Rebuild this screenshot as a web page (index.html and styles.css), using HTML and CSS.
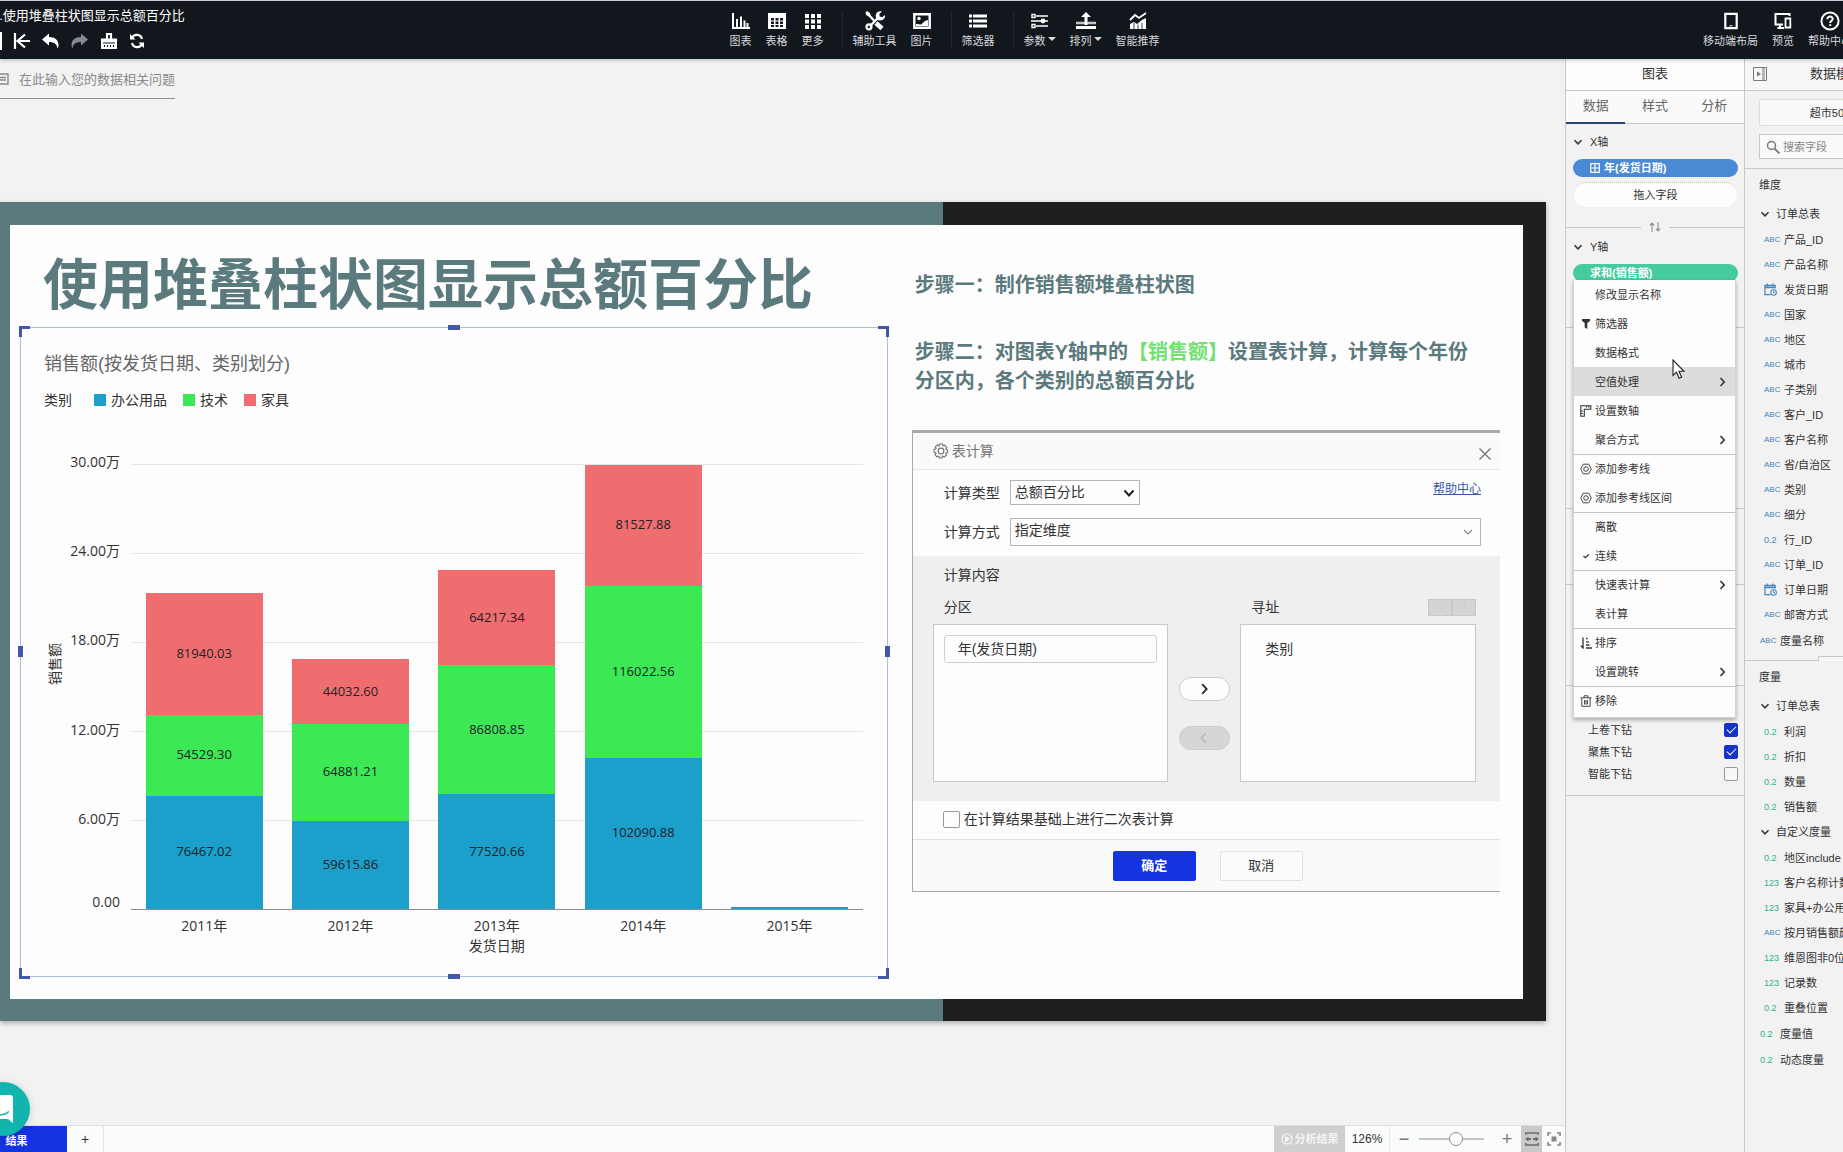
FILE: index.html
```html
<!DOCTYPE html>
<html lang="zh-CN">
<head>
<meta charset="utf-8">
<meta name="viewport" content="width=device-width, initial-scale=1">
<title>2.使用堆叠柱状图显示总额百分比</title>
<link rel="stylesheet" href="styles.css">
</head>
<body>
<svg class="defs" aria-hidden="true">
  <symbol id="chev-down" viewBox="0 0 10 10"><path d="M1.5 3.2 5 6.8 8.500 3.200" fill="none" stroke="currentColor" stroke-width="1.500"/></symbol>
  <symbol id="chev-right" viewBox="0 0 10 10"><path d="M3.500 1 7.200 5 3.500 9" fill="none" stroke="currentColor" stroke-width="1.600"/></symbol>
  <symbol id="calendar" viewBox="0 0 14 14"><path d="M12 6V2.500H1v10h6M1 5h11M3.500 .5v3M9.500 .5v3" fill="none" stroke="currentColor" stroke-width="1.300"/><path d="M1 2.500h11V5H1z" fill="currentColor" opacity=".5"/><circle cx="10.300" cy="10.300" r="3" fill="none" stroke="currentColor" stroke-width="1.100"/><path d="M10.300 8.500v2h1.500" fill="none" stroke="currentColor"/></symbol>
  <symbol id="target" viewBox="0 0 12 12"><path d="M3.300 1.200h5.400L11.300 6l-2.600 4.800H3.300L.7 6z" fill="none" stroke="currentColor" stroke-width=".9"/><circle cx="6" cy="6" r="2.300" fill="none" stroke="currentColor" stroke-width=".9"/></symbol>
</svg>

<div class="app">
  <header class="topbar">
    <div class="topbar-left">
      <h1 class="doc-title">2.使用堆叠柱状图显示总额百分比</h1>
      <div class="history">
        <button class="icon-btn" aria-label="返回"><svg width="18" height="16" viewBox="0 0 18 16"><path d="M2 0v16M17 8H4M12 1.500 4.500 8l7.500 6.500" fill="none" stroke="currentColor" stroke-width="2.200"/></svg></button>
        <button class="icon-btn" aria-label="撤销"><svg width="18" height="16" viewBox="0 0 18 16"><path d="M0 6.500 7 .5V4c6 0 9.500 3 9.500 8 0 1.500-.5 3-1 3.500C15 11 12 9 7 9v3.500z" fill="currentColor"/></svg></button>
        <button class="icon-btn icon-dim" aria-label="重做"><svg width="18" height="16" viewBox="0 0 18 16"><path d="M17 6.500 10 .5V4C4 4 .5 7 .5 12c0 1.500.5 3 1 3.500C2 11 5 9 10 9v3.500z" fill="currentColor"/></svg></button>
        <button class="icon-btn" aria-label="清空"><svg width="18" height="18" viewBox="0 0 18 18"><path d="M2 9V7.500h14V9M7 7V2h4v5" fill="none" stroke="currentColor" stroke-width="2.200"/><path d="M1 8h16v9H1z" fill="currentColor"/><path d="M3 11h12M4.500 15v-2M7.500 15v-2M10.500 15v-2M13.500 15v-2" stroke="#12161d" stroke-width="1.100"/></svg></button>
        <button class="icon-btn" aria-label="刷新"><svg width="16" height="16" viewBox="0 0 16 16"><path d="M13 6A5.300 5.300 0 0 0 3 5M3 10a5.300 5.300 0 0 0 10 1" fill="none" stroke="currentColor" stroke-width="2.200"/><path d="M1 1v5.500h5.500zM15 15V9.500H9.500z" fill="currentColor"/></svg></button>
      </div>
    </div>
    <nav class="tools" aria-label="工具栏">
      <button class="tool"><svg width="18" height="18" viewBox="0 0 18 18"><path d="M1 1v15h17" fill="none" stroke="currentColor" stroke-width="2"/><path d="M5 15V7M9 15V4.500M12.500 15V8.500M15.500 15v-4" stroke="currentColor" stroke-width="2"/></svg><span>图表</span></button>
      <button class="tool"><svg width="18" height="18" viewBox="0 0 18 18"><path d="M0 1h18v16H0z" fill="currentColor"/><path d="M3 6h3v2.500H3zM7.500 6h3v2.500h-3zM12 6h3v2.500h-3zM3 9.500h3V12H3zM7.500 9.500h3V12h-3zM12 9.500h3V12h-3zM3 13h3v2H3zM7.500 13h3v2h-3zM12 13h3v2h-3z" fill="#12161d"/></svg><span>表格</span></button>
      <button class="tool"><svg width="18" height="18" viewBox="0 0 18 18"><path d="M1 2h4v4H1zM7 2h4v4H7zM13 2h4v4h-4zM1 7.500h4v4H1zM7 7.500h4v4H7zM13 7.500h4v4h-4zM1 13h4v4H1zM7 13h4v4H7zM13 13h4v4h-4z" fill="currentColor"/></svg><span>更多</span></button>
      <span class="divider"></span>
      <button class="tool"><svg width="20" height="20" viewBox="0 0 20 20"><path d="M2 2l7.500 8M5.500 14.500 14 6" stroke="currentColor" stroke-width="2.400"/><path d="m11 12 6 5.500" stroke="currentColor" stroke-width="4.600"/><path d="M.5 1.500 2 0l3 2 .5 3L4 5.500 1 4z" fill="currentColor"/><path d="M17 .5a4.700 4.700 0 1 0 3 3.500l-2.700 2.200-2.500-.8-.5-2.500z" fill="currentColor"/><circle cx="4" cy="15.800" r="3.600" fill="currentColor"/><circle cx="3.800" cy="16" r="1.200" fill="#12161d"/></svg><span>辅助工具</span></button>
      <button class="tool"><svg width="18" height="18" viewBox="0 0 18 18"><path d="M1.300 2.300h15.400v13.400H1.300z" fill="none" stroke="currentColor" stroke-width="2.400"/><circle cx="6" cy="6.500" r="1.700" fill="currentColor"/><path d="M3 14v-2l5 .5L12 9l3-1v6z" fill="currentColor"/></svg><span>图片</span></button>
      <span class="divider"></span>
      <button class="tool"><svg width="18" height="18" viewBox="0 0 18 18"><path d="M0 4h3M4 4h14M0 9h3M4 9h14M0 14h3M4 14h14" stroke="currentColor" stroke-width="2.800"/></svg><span>筛选器</span></button>
      <span class="divider"></span>
      <button class="tool"><svg width="18" height="18" viewBox="0 0 18 18"><path d="M5 4h12M0 9h17M5 14h12" stroke="currentColor" stroke-width="1.600"/><path d="M1 2.500h3v3H1zM1 12.500h3v3H1z" fill="none" stroke="currentColor" stroke-width="1.400"/><circle cx="12" cy="9" r="2.400" fill="currentColor"/></svg><span>参数<i class="caret"></i></span></button>
      <button class="tool"><svg width="20" height="18" viewBox="0 0 20 18"><path d="M10 0 5 5h3.500v8h3V5H15z" fill="currentColor"/><path d="M0 11h20" stroke="currentColor" stroke-width="2.600" opacity=".75"/><path d="M0 15.500h20" stroke="currentColor" stroke-width="3"/></svg><span>排列<i class="caret"></i></span></button>
      <button class="tool"><svg width="18" height="18" viewBox="0 0 18 18"><path d="m1 8 5-5 4 3 7-5" fill="none" stroke="currentColor" stroke-width="1.800"/><path d="M1 17v-5l4-2 3 2 5-4 4-2v11zM1 17h17" fill="currentColor"/><path d="M5 17v-6M9 17v-4.500M13 17v-6" stroke="#12161d" stroke-width=".8"/></svg><span>智能推荐</span></button>
    </nav>
    <div class="tools tools-right">
      <button class="tool"><svg width="14" height="18" viewBox="0 0 14 18"><path d="M1.300 1.800h11.400v14.400H1.300z" fill="none" stroke="currentColor" stroke-width="2.200"/><path d="M5.500 13.800h3" stroke="currentColor"/></svg><span>移动端布局</span></button>
      <button class="tool"><svg width="18" height="18" viewBox="0 0 18 18"><path d="M15.500 4V2H1.500v10.500H9M3.500 16H10M6 12v4" fill="none" stroke="currentColor" stroke-width="2"/><path d="M11.500 6.500h4.800v9h-4.800z" fill="none" stroke="currentColor" stroke-width="1.800"/></svg><span>预览</span></button>
      <button class="tool"><svg width="20" height="20" viewBox="0 0 20 20"><circle cx="10" cy="10" r="8.600" fill="none" stroke="currentColor" stroke-width="2"/><path d="M7.300 8.200C7.300 4.500 13 5 12.700 8c-.2 1.700-2.500 2-2.500 4M10.200 13.200v1.800" fill="none" stroke="currentColor" stroke-width="2"/></svg><span>帮助中心</span></button>
    </div>
  </header>

  <div class="workspace">
    <main class="canvas">
      <div class="ask">
        <svg class="ask-icon" width="9" height="12" viewBox="0 0 9 12"><path d="M0 1h8v10H0M0 4.500h6M0 7h6" fill="none" stroke="currentColor" stroke-width="1.400"/></svg>
        <input class="ask-input" type="text" placeholder="在此输入您的数据相关问题" aria-label="在此输入您的数据相关问题">
      </div>

      <div class="slide">
        <div class="slide-body">
          <section class="slide-chart">
            <h2 class="slide-title">使用堆叠柱状图显示总额百分比</h2>
            <figure class="chart">
              <i class="corner corner-tl"></i><i class="corner corner-tr"></i><i class="corner corner-bl"></i><i class="corner corner-br"></i>
              <i class="knob knob-top"></i><i class="knob knob-bottom"></i><i class="knob knob-left"></i><i class="knob knob-right"></i>
              <figcaption class="chart-title">销售额(按发货日期、类别划分)</figcaption>
              <ul class="legend">
                <li class="legend-name">类别</li>
                <li><i class="swatch office"></i>办公用品</li>
                <li><i class="swatch tech"></i>技术</li>
                <li><i class="swatch furniture"></i>家具</li>
              </ul>
              <div class="plot-grid">
                <span class="y-title">销售额</span>
                <ol class="y-axis">
                  <li><span>30.00万</span></li><li><span>24.00万</span></li><li><span>18.00万</span></li><li><span>12.00万</span></li><li><span>6.00万</span></li><li><span>0.00</span></li>
                </ol>
                <div class="plot">
                  <div class="stack"><span class="seg furniture" style="height:27.31%">81940.03</span><span class="seg tech" style="height:18.18%">54529.30</span><span class="seg office" style="height:25.49%">76467.02</span></div>
                  <div class="stack"><span class="seg furniture" style="height:14.68%">44032.60</span><span class="seg tech" style="height:21.63%">64881.21</span><span class="seg office" style="height:19.87%">59615.86</span></div>
                  <div class="stack"><span class="seg furniture" style="height:21.41%">64217.34</span><span class="seg tech" style="height:28.94%">86808.85</span><span class="seg office" style="height:25.84%">77520.66</span></div>
                  <div class="stack"><span class="seg furniture" style="height:27.18%">81527.88</span><span class="seg tech" style="height:38.67%">116022.56</span><span class="seg office" style="height:34.03%">102090.88</span></div>
                  <div class="stack"><span class="seg office" style="height:0.4%"></span></div>
                </div>
                <ol class="x-axis"><li>2011年</li><li>2012年</li><li>2013年</li><li>2014年</li><li>2015年</li></ol>
                <span class="x-title">发货日期</span>
              </div>
            </figure>
          </section>

          <section class="slide-steps">
            <p class="step">步骤一：制作销售额堆叠柱状图</p>
            <p class="step step-two">步骤二：对图表Y轴中的<em class="hl">【销售额】</em>设置表计算，计算每个年份<br>分区内，各个类别的总额百分比</p>

            <form class="dialog" onsubmit="return false">
              <div class="dialog-head">
                <svg width="16" height="16" viewBox="0 0 16 16"><path d="m6.500 1 3 0 .5 1.800 1.800-.7 2 2.400-1 1.600 1.700 1v2.400l-1.700.8.5 2-2.200 1.800-1.500-1-1 1.900H6.500l-.7-1.800-2 .7-1.700-2.200.9-1.600L1 9V6.500l2-.8-.7-1.900L4.500 2l1.500.9z" fill="none" stroke="currentColor" stroke-width="1.200"/><circle cx="8" cy="8" r="2.800" fill="none" stroke="currentColor" stroke-width="1.200"/></svg>
                <h3 class="dialog-title">表计算</h3>
                <button class="dialog-close" aria-label="关闭"><svg width="12" height="12" viewBox="0 0 12 12"><path d="m.5.5 11 11M11.500.5l-11 11" stroke="currentColor" stroke-width="1.400"/></svg></button>
              </div>
              <div class="dialog-fields">
                <label for="calc-type">计算类型</label>
                <span class="select select-short"><select id="calc-type"><option>总额百分比</option></select><svg class="select-arrow dark" width="12" height="12" viewBox="0 0 12 12"><path d="m1.500 3.500 4.500 5 4.500-5" fill="none" stroke="currentColor" stroke-width="2"/></svg></span>
                <a class="help" href="#help">帮助中心</a>
                <label for="calc-mode">计算方式</label>
                <span class="select select-long"><select id="calc-mode"><option>指定维度</option></select><svg class="select-arrow" width="12" height="12" viewBox="0 0 12 12"><path d="M2 4l4 4 4-4" fill="none" stroke="currentColor" stroke-width="1.200"/></svg></span>
              </div>
              <div class="dialog-scope">
                <h4 class="scope-title">计算内容</h4>
                <span class="scope-name scope-part">分区</span>
                <div class="scope-addr"><span class="scope-name">寻址</span><span class="order"><button disabled aria-label="下移">↓</button><button disabled aria-label="上移">↑</button></span></div>
                <div class="list"><span class="list-item chosen">年(发货日期)</span></div>
                <div class="movers">
                  <button class="mover" aria-label="移到寻址"><svg width="12" height="12"><use href="#chev-right"/></svg></button>
                  <button class="mover mover-off" disabled aria-label="移到分区"><svg width="12" height="12" class="flip"><use href="#chev-right"/></svg></button>
                </div>
                <div class="list"><span class="list-item">类别</span></div>
              </div>
              <label class="dialog-again"><input type="checkbox" class="box">在计算结果基础上进行二次表计算</label>
              <div class="dialog-foot"><button class="btn btn-primary">确定</button><button class="btn">取消</button></div>
            </form>
          </section>
        </div>
      </div>

      <footer class="statusbar">
        <button class="sheet">结果</button>
        <button class="sheet-add" aria-label="新建">+</button>
        <button class="analyse" disabled><svg width="12" height="12" viewBox="0 0 12 12"><circle cx="6" cy="6" r="5" fill="none" stroke="currentColor" stroke-width="1.200"/><path d="M4.500 3.500v5L8.500 6zM9 9l3 3" fill="currentColor" stroke="currentColor"/></svg>分析结果</button>
        <span class="zoom-value">126%</span>
        <button class="zoom-btn" aria-label="缩小">−</button>
        <input class="zoom-range" type="range" min="0" max="100" value="59" aria-label="缩放">
        <button class="zoom-btn zoom-in" aria-label="放大">+</button>
        <button class="fit fit-on" aria-label="适应宽度"><svg width="14" height="14" viewBox="0 0 14 14"><path d="M.8 3V1h12.400v2M.8 11v2h12.400v-2" fill="none" stroke="currentColor" stroke-width="1.400"/><path d="m0 7 3.500-2.500V6H6v2H3.500v1.500zM14 7l-3.500-2.500V6H8v2h2.500v1.500z" fill="currentColor"/></svg></button>
        <button class="fit" aria-label="适应页面"><svg width="14" height="14" viewBox="0 0 14 14"><path d="M4 1H1v3M10 1h3v3M4 13H1v-3M10 13h3v-3" fill="none" stroke="currentColor" stroke-width="1.700"/><path d="M4.500 4.500h5v5h-5z" fill="currentColor"/></svg></button>
      </footer>
      <button class="chat" aria-label="在线客服"><svg width="32" height="32" viewBox="0 0 32 32"><path d="M6 2h20a3 3 0 0 1 3 3v25l-5-4H6a3 3 0 0 1-3-3V5a3 3 0 0 1 3-3z" fill="#fff"/><path d="M8 19c5 4 12 4 17-.5" fill="none" stroke="#12b5ae" stroke-width="1.500"/></svg></button>
    </main>

    <aside class="panel">
      <h2 class="panel-title">图表</h2>
      <div class="tabs" role="tablist">
        <button class="tab tab-on" role="tab" aria-selected="true">数据</button><button class="tab" role="tab">样式</button><button class="tab" role="tab">分析</button>
      </div>
      <section class="shelf">
        <h3 class="shelf-name"><svg width="10" height="10"><use href="#chev-down"/></svg>X轴</h3>
        <button class="pill pill-blue"><svg width="10" height="10" viewBox="0 0 10 10"><path d="M.7.7h8.600v8.600H.7zM5 .7v8.600M.7 5h8.600" fill="none" stroke="currentColor" stroke-width="1.200"/></svg>年(发货日期)</button>
        <div class="drop">拖入字段</div>
      </section>
      <div class="swap"><svg width="12" height="10" viewBox="0 0 12 10"><path d="M3 10V1M.8 3.300 3 1l2.200 2.300M9 0v9M6.800 6.700 9 9l2.200-2.300" fill="none" stroke="currentColor" stroke-width="1.100"/></svg></div>
      <section class="shelf shelf-y">
        <h3 class="shelf-name"><svg width="10" height="10"><use href="#chev-down"/></svg>Y轴</h3>
        <button class="pill pill-green">求和(销售额)</button>
        <div class="menu" role="menu">
          <div class="menu-group">
            <button role="menuitem">修改显示名称</button>
            <button role="menuitem"><svg class="lead" width="12" height="12" viewBox="0 0 12 12"><path d="M2 1h8v2L7.300 5v6L4.700 9.500V5L2 3z" fill="currentColor"/></svg>筛选器</button>
            <button role="menuitem">数据格式</button>
            <button role="menuitem" class="hover">空值处理<svg class="more" width="10" height="10"><use href="#chev-right"/></svg></button>
            <button role="menuitem"><svg class="lead" width="12" height="12" viewBox="0 0 12 12"><path d="M.8.800h10v3.500H4.300v7H.8zM6.500.8v1.800M8.800.8v1.800M.8 6h2M.8 8.500h2" fill="none" stroke="currentColor" stroke-width="1.100"/></svg>设置数轴</button>
            <button role="menuitem">聚合方式<svg class="more" width="10" height="10"><use href="#chev-right"/></svg></button>
          </div>
          <div class="menu-group">
            <button role="menuitem"><svg class="lead" width="12" height="12"><use href="#target"/></svg>添加参考线</button>
            <button role="menuitem"><svg class="lead" width="12" height="12"><use href="#target"/></svg>添加参考线区间</button>
          </div>
          <div class="menu-group">
            <button role="menuitem">离散</button>
            <button role="menuitem"><svg class="lead" width="10" height="10" viewBox="0 0 10 10"><path d="m2.500 5 1.800 1.800L8 3.500" fill="none" stroke="currentColor" stroke-width="1.200"/></svg>连续</button>
          </div>
          <div class="menu-group">
            <button role="menuitem">快速表计算<svg class="more" width="10" height="10"><use href="#chev-right"/></svg></button>
            <button role="menuitem">表计算</button>
          </div>
          <div class="menu-group">
            <button role="menuitem"><svg class="lead" width="12" height="12" viewBox="0 0 12 12"><path d="M3 .5v10.300M.8 8.600 3 11l.2-2.400M6 1.500h1.500M6 4.800h3M6 8h3.500M6 11h6" fill="none" stroke="currentColor" stroke-width="1.300"/></svg>排序</button>
            <button role="menuitem">设置跳转<svg class="more" width="10" height="10"><use href="#chev-right"/></svg></button>
          </div>
          <div class="menu-group">
            <button role="menuitem"><svg class="lead" width="12" height="12" viewBox="0 0 12 12"><path d="M.5 2.800h11M4 2.500V.8h4v1.700M1.800 3v8.300h8.400V3M4.500 5v4.500M6 5v4.500M7.500 5v4.500" fill="none" stroke="currentColor" stroke-width=".9"/></svg>移除</button>
          </div>
          <svg class="cursor" width="14" height="21" viewBox="0 0 14 21"><path d="M1 1v15.500l3.500-3.300 2.600 6 2.500-1-2.600-5.900H12z" fill="#fff" stroke="#222" stroke-width="1.100"/></svg>
        </div>
      </section>
      <section class="blank blank-tall"></section>
      <section class="blank blank-low"></section>
      <section class="blank blank-mid"></section>
      <section class="drill">
        <label>上卷下钻<input type="checkbox" class="tick" checked></label>
        <label>聚焦下钻<input type="checkbox" class="tick" checked></label>
        <label>智能下钻<input type="checkbox" class="tick"></label>
      </section>
    </aside>

    <aside class="model">
      <div class="model-head"><svg width="14" height="14" viewBox="0 0 14 14"><path d="M.5.500h13v13H.5z" fill="none" stroke="currentColor"/><path d="M10.500 1v12" stroke="currentColor" stroke-width="3" opacity=".5"/><path d="M4 4.500v5L8 7z" fill="currentColor"/></svg><h2>数据模型</h2></div>
      <button class="source">超市500</button>
      <label class="search"><svg width="14" height="14" viewBox="0 0 14 14"><circle cx="5.500" cy="5.500" r="4" fill="none" stroke="currentColor" stroke-width="1.500"/><path d="m8.500 8.500 5 5" stroke="currentColor" stroke-width="1.800"/></svg><input type="search" placeholder="搜索字段" aria-label="搜索字段"></label>
      <section class="fields fields-dim">
        <h3>维度</h3>
        <ul>
          <li class="folder"><svg width="10" height="10"><use href="#chev-down"/></svg>订单总表</li>
          <li><b>ABC</b>产品_ID</li>
          <li><b>ABC</b>产品名称</li>
          <li><svg class="cal" width="13" height="13"><use href="#calendar"/></svg>发货日期</li>
          <li><b>ABC</b>国家</li>
          <li><b>ABC</b>地区</li>
          <li><b>ABC</b>城市</li>
          <li><b>ABC</b>子类别</li>
          <li><b>ABC</b>客户_ID</li>
          <li><b>ABC</b>客户名称</li>
          <li><b>ABC</b>省/自治区</li>
          <li><b>ABC</b>类别</li>
          <li><b>ABC</b>细分</li>
          <li><b class="num">0.2</b>行_ID</li>
          <li><b>ABC</b>订单_ID</li>
          <li><svg class="cal" width="13" height="13"><use href="#calendar"/></svg>订单日期</li>
          <li><b>ABC</b>邮寄方式</li>
          <li class="outer"><b>ABC</b>度量名称</li>
        </ul>
      </section>
      <section class="fields fields-measure">
        <i class="grip"></i>
        <h3>度量</h3>
        <ul>
          <li class="folder"><svg width="10" height="10"><use href="#chev-down"/></svg>订单总表</li>
          <li><b class="num green">0.2</b>利润</li>
          <li><b class="num green">0.2</b>折扣</li>
          <li><b class="num green">0.2</b>数量</li>
          <li><b class="num green">0.2</b>销售额</li>
          <li class="folder"><svg width="10" height="10"><use href="#chev-down"/></svg>自定义度量</li>
          <li><b class="num green">0.2</b>地区include</li>
          <li><b class="num green">123</b>客户名称计数</li>
          <li><b class="num green">123</b>家具+办公用品</li>
          <li><b>ABC</b>按月销售额颜色</li>
          <li><b class="num green">123</b>维恩图非0位置</li>
          <li><b class="num green">123</b>记录数</li>
          <li><b class="num green">0.2</b>重叠位置</li>
          <li class="outer"><b class="num green">0.2</b>度量值</li>
          <li class="outer"><b class="num green">0.2</b>动态度量</li>
        </ul>
      </section>
    </aside>
  </div>
</div>
</body>
</html>
```

FILE: styles.css
```css
* { box-sizing: border-box; }
html, body { height: 100%; }
body {
  margin: 0;
  overflow: hidden;
  background: #f2f2f2;
  color: #333;
  font: 11px/16px "Liberation Sans", "Noto Sans CJK SC", sans-serif;
}
h1, h2, h3, h4, p, ul, ol, figure { margin: 0; padding: 0; font-weight: 400; }
ul, ol { list-style: none; }
button, input, select { font: inherit; color: inherit; margin: 0; }
button { padding: 0; border: 0; background: none; }
svg { display: block; flex: none; }
.defs { position: absolute; width: 0; height: 0; }

/* The editor extends past the right edge of the window. */
.app { display: flex; flex-direction: column; width: calc(100% + 46px); height: 100vh; border-top: 1px solid #d3dbe2; }

/* Top bar */
.topbar {
  display: grid;
  grid-template-columns: 1fr auto 1fr;
  flex: none;
  height: 58px;
  background: #12161d;
  color: #fff;
  box-shadow: 0 1px 4px rgba(0, 0, 0, .25);
  z-index: 1;
}
.topbar-left { display: flex; flex-direction: column; }
.doc-title { margin: 6px 0 0 -8px; font-size: 13px; line-height: 18px; white-space: nowrap; }
.history { display: flex; align-items: center; gap: 11px; height: 18px; margin-top: 7px; border-left: 2px solid #fff; padding-left: 11px; }
.icon-dim { color: #85888c; }
.tools { display: flex; gap: 14px; padding-top: 9px; }
.tools-right { justify-content: flex-end; padding-right: 37px; }
.tool { display: flex; flex-direction: column; align-items: center; white-space: nowrap; align-self: flex-start; }
.tool svg { height: 22px; }
.tool span { margin-top: 1px; line-height: 16px; color: #d8dadd; }
.divider { width: 1px; height: 36px; margin: 2px -4px 0 4px; background: #232830; }
.caret { display: inline-block; margin-left: 2px; vertical-align: 4px; border: 4px solid transparent; border-top-color: #d8dadd; border-bottom: 0; }

.workspace { display: flex; flex: 1; min-height: 0; }

/* Canvas */
.canvas { position: relative; display: flex; flex-direction: column; flex: 1; min-width: 0; }
.ask { display: flex; align-items: center; gap: 10px; width: 175px; height: 40px; border-bottom: 1px solid #8f8f8f; color: #8a8a8a; }
.ask-input { flex: 1; min-width: 0; border: 0; padding: 2px 0 0; background: none; font-size: 13px; }
.ask-input::placeholder { color: #8a8a8a; }

.slide {
  margin: 103px 19px 0 0;
  padding: 23px 23px 22px 10px;
  background: linear-gradient(90deg, #5b7a7d 61%, #1f1f1f 61%);
  box-shadow: 0 2px 5px rgba(0, 0, 0, .3);
}
.slide-body { display: grid; grid-template-columns: 59fr 40fr; gap: 24px; padding: 0 23px 22px 10px; background: #fdfdfd; }
.slide-title { padding: 24px 0 6px 23px; color: #5b7a7d; font-size: 55px; line-height: 72px; font-weight: 700; white-space: nowrap; }

.chart { position: relative; padding: 24px 24px 20px 23px; border: 1px solid #a9bfe0; font-size: 14px; line-height: 20px; }
.corner { position: absolute; width: 11px; height: 11px; border: 0 solid #4257a8; }
.corner-tl { top: -2px; left: -2px; border-width: 3px 0 0 3px; }
.corner-tr { top: -2px; right: -2px; border-width: 3px 3px 0 0; }
.corner-bl { bottom: -3px; left: -2px; border-width: 0 0 3px 3px; }
.corner-br { bottom: -3px; right: -2px; border-width: 0 3px 3px 0; }
.knob { position: absolute; width: 12px; height: 5px; background: #4257a8; }
.knob-top { top: -3px; left: 50%; margin-left: -6px; }
.knob-bottom { bottom: -3px; left: 50%; margin-left: -6px; }
.knob-left, .knob-right { top: 50%; width: 5px; height: 11px; margin-top: -6px; }
.knob-left { left: -3px; }
.knob-right { right: -3px; }
.chart-title { color: #666; font-size: 18px; line-height: 24px; }
.legend { display: flex; gap: 16px; margin-top: 14px; }
.legend li { display: flex; align-items: center; gap: 5px; }
.legend .legend-name { margin-right: 6px; }
.swatch { width: 12px; height: 12px; }
.office { background: #1d9fcb; }
.tech { background: #3de855; }
.furniture { background: #ef6d6f; }

.plot-grid { display: grid; grid-template-columns: 22px 54px 1fr; grid-template-rows: 446px auto auto; margin-top: 54px; font-family: "Open Sans", "Noto Sans CJK SC", sans-serif; }
.y-title { place-self: center; margin-top: -46px; writing-mode: vertical-rl; text-orientation: sideways; rotate: 180deg; }
.y-axis { display: flex; flex-direction: column; text-align: right; }
.y-axis li { flex: 1 1 0; }
.y-axis li:last-child { flex: none; height: 0; }
.y-axis span { display: block; margin-top: -12px; }
.y-axis li:last-child span { margin-top: -18px; }
.plot {
  display: flex;
  margin-left: 11px;
  border-bottom: 1px solid #8c8c8c;
  background: linear-gradient(#e6e6e6 1px, transparent 1px) 0 0 / 100% 20%;
}
.stack { display: flex; flex-direction: column; justify-content: flex-end; flex: 1; padding: 0 2%; }
.seg { display: flex; align-items: center; justify-content: center; padding-bottom: 2px; color: #1c2226; font-size: 13px; }
.x-axis { display: flex; grid-column: 3; margin: 6px 0 0 11px; text-align: center; }
.x-axis li { flex: 1; }
.x-title { grid-column: 3; margin-left: 11px; text-align: center; }

.step { padding-left: 3px; color: #5b7a7d; font-size: 20px; line-height: 29px; font-weight: 700; white-space: nowrap; }
.slide-steps { padding-top: 46px; }
.step-two { margin-top: 38px; }
.hl { color: #72e072; font-style: normal; }

/* Table calculation dialog */
.dialog { margin-top: 34px; border: 1px solid #a9a9a9; border-width: 3px 0 1px 1px; font-size: 14px; line-height: 20px; background: #fdfdfd; }
.dialog-head { display: flex; align-items: center; gap: 3px; height: 37px; padding: 0 9px 0 20px; border-bottom: 1px solid #e6e6e6; background: #fafafa; color: #777; }
.dialog-title { flex: 1; font-size: 14px; }
.dialog-close { padding-top: 6px; }
.dialog-fields { display: grid; grid-template-columns: 57px 130px 1fr; column-gap: 9px; padding: 10px 19px 10px 31px; row-gap: 13px; align-items: center; }
.select { display: grid; align-items: center; }
.select > * { grid-area: 1 / 1; }
.select select { width: 100%; height: 25px; padding: 0 4px 2px; border: 1px solid #b5b5b5; border-radius: 0; background: #fdfdfd; appearance: none; }
.select-arrow { justify-self: end; margin-right: 5px; color: #8a8a8a; pointer-events: none; }
.select-long { grid-column: 2 / 4; }
.select-long select { height: 28px; padding-bottom: 4px; }
.select-long .select-arrow { margin-right: 7px; }
.dark { color: #222; }
.help { justify-self: end; margin-bottom: 8px; color: #3556b0; font-size: 12px; line-height: 16px; }
.dialog-scope { display: grid; grid-template-columns: 1fr 72px 1fr; padding: 9px 24px 19px 20px; background: #efefef; }
.scope-title { grid-column: 1 / 4; padding-left: 11px; font-size: 14px; }
.scope-part { grid-column: 1 / 3; padding: 12px 0 7px 11px; }
.scope-addr { display: flex; justify-content: space-between; align-items: center; padding: 12px 0 7px 11px; }
.order { display: flex; }
.order button { width: 24px; height: 17px; border: 1px solid #c8c8c8; background: #d4d4d4; color: #bbb; font-size: 10px; line-height: 12px; }
.list { height: 158px; padding: 10px; border: 1px solid #c8c8c8; background: #fdfdfd; }
.list-item { display: block; height: 28px; padding: 3px 13px; border: 1px solid transparent; border-radius: 3px; }
.chosen { border-color: #cfcfcf; }
.movers { display: flex; flex-direction: column; align-items: center; gap: 25px; padding-top: 53px; }
.mover { display: grid; place-items: center; width: 51px; height: 24px; border: 1px solid #ccc; border-radius: 12px; background: #fdfdfd; }
.mover-off { background: #d6d6d6; color: #bbb; }
.flip { rotate: 180deg; }
.dialog-again { display: flex; align-items: center; gap: 4px; height: 38px; padding: 0 0 2px 30px; }
.box { width: 17px; height: 17px; border: 1px solid #999; border-radius: 2px; background: #fdfdfd; appearance: none; }
.dialog-foot { display: flex; justify-content: center; gap: 24px; height: 52px; padding: 11px 0 0 3px; border-top: 1px solid #e0e0e0; background: #f9fafa; }
.btn { width: 83px; height: 30px; border: 1px solid #dfe1e3; border-radius: 2px; background: #fafbfb; font-size: 13px; }
.btn-primary { border-color: #1533e0; background: #1533e0; color: #fff; font-weight: 700; }

/* Status bar */
.statusbar { display: flex; align-items: stretch; flex: none; height: 27px; margin-top: auto; border-top: 1px solid #dcdfe1; background: #fafbfb; }
.sheet { width: 67px; padding: 3px 36px 0 2px; background: #1533e0; color: #fff; font-weight: 700; white-space: nowrap; }
.sheet-add { width: 37px; border-right: 1px solid #e3e6e6; font-size: 14px; }
.analyse { display: flex; align-items: center; justify-content: center; gap: 2px; width: 71px; margin-left: auto; background: #cfcfcf; color: #f4f4f4; font-weight: 700; }
.zoom-value { width: 45px; border-right: 1px solid #e6e8e8; font-size: 12px; line-height: 26px; text-align: center; }
.zoom-btn { width: 28px; color: #777; font-size: 18px; line-height: 20px; }
.zoom-range { width: 65px; margin: 0 9px 0 1px; background: none; appearance: none; }
.zoom-range::-webkit-slider-runnable-track { height: 2px; background: #c4c4c4; }
.zoom-range::-webkit-slider-thumb { width: 14px; height: 14px; margin-top: -6px; border: 1px solid #8c8c8c; border-radius: 50%; background: #fdfdfd; appearance: none; }
.fit { display: grid; place-items: center; width: 23px; color: #888; }
.fit-on { width: 21px; background: #cacaca; color: #6b6b6b; }
.chat { position: absolute; left: -24px; bottom: 16px; display: grid; place-items: center; width: 54px; height: 54px; padding-left: 8px; border-radius: 50%; background: #12b5ae; box-shadow: 0 1px 8px rgba(0, 0, 0, .15); }
.chat svg { margin-left: -14px; }

/* Chart settings panel */
.panel { display: flex; flex-direction: column; flex: none; width: 180px; border: 1px solid #c8c8c8; border-width: 0 1px; }
.panel-title { height: 32px; border-bottom: 1px solid #c8c8c8; background: #fdfdfd; font-size: 13px; line-height: 29px; text-align: center; }
.tabs { display: flex; height: 33px; border-bottom: 1px solid #c8c8c8; background: #fafafa; }
.tab { flex: 1; margin-bottom: -1px; padding-bottom: 1px; border-bottom: 2px solid transparent; font-size: 13px; color: #666; }
.tab-on { border-color: #2b4477; }
.shelf { padding: 10px 6px 0 7px; }
.shelf-name { display: flex; align-items: center; gap: 7px; font-size: 11px; line-height: 16px; }
.pill { display: flex; align-items: center; gap: 4px; width: 100%; height: 18px; margin-top: 9px; padding-left: 17px; border-radius: 9px; color: #fff; font-weight: 700; }
.pill-blue { background: #4a8ad4; }
.pill-green { background: #46cba0; }
.drop { height: 25px; margin: 5px 1px 0; border-top: 1px dotted #d3b9a8; border-radius: 12px; background: #fdfdfd; line-height: 24px; text-align: center; }
.swap { display: flex; align-items: center; gap: 5px; height: 16px; margin-top: 12px; color: #8c8c8c; }
.swap::before, .swap::after { content: ""; flex: 1; height: 1px; background: #c8c8c8; }
.swap svg { margin: 0 3px; }
.shelf-y { position: relative; height: 93px; padding-top: 4px; border-bottom: 1px solid #c8c8c8; }
.blank { border-bottom: 1px solid #c8c8c8; }
.blank-tall { height: 181px; }
.blank-low { height: 76px; }
.blank-mid { height: 101px; }
.drill { padding: 33px 6px 10px 22px; border-bottom: 1px solid #c8c8c8; }
.drill label { display: flex; align-items: center; justify-content: space-between; height: 22px; }
.tick { display: grid; place-items: center; width: 14px; height: 14px; border: 1px solid #9a9a9a; border-radius: 2px; background: #f7f7f7; appearance: none; }
.tick:checked { border-color: #1533c8; background: #1533c8; }
.tick:checked::after { content: ""; width: 8px; height: 4px; margin-top: -3px; border: solid #fff; border-width: 0 0 1px 1px; rotate: -45deg; }

.menu { position: absolute; top: 45px; left: 7px; width: 163px; padding-bottom: 2px; border: 1px solid #d3d3d3; border-top: 0; background: #fdfdfd; box-shadow: 0 2px 4px rgba(0, 0, 0, .3); z-index: 2; }
.menu-group + .menu-group { box-shadow: inset 0 1px #c4c4c4; }
.menu button { display: flex; align-items: center; position: relative; width: 100%; height: 29px; padding-left: 21px; }
.menu .lead { width: 12px; margin: 0 3px 0 -15px; }
.menu .more { margin-left: auto; margin-right: 8px; }
.menu .hover { background: #dcdcdc; }
.cursor { position: absolute; top: 79px; left: 98px; }

/* Data model panel */
.model { display: flex; flex-direction: column; flex: none; width: 144px; font-size: 11px; white-space: nowrap; }
.model-head { display: flex; align-items: center; gap: 43px; height: 32px; padding: 0 0 1px 8px; border-bottom: 1px solid #c8c8c8; background: #f7f7f7; }
.model-head svg { color: #777; }
.model-head h2 { font-size: 13px; line-height: 18px; }
.source { height: 27px; margin: 8px 15px 0 14px; padding-left: 27px; border: 1px solid #dcdfe0; border-radius: 2px; background: #f8f9f9; text-align: center; }
.search { display: flex; align-items: center; gap: 3px; height: 25px; margin: 8px 15px 0 14px; padding-left: 6px; border: 1px solid #c8c8c8; background: #fafafa; color: #777; }
.search input { width: 90px; padding: 0; border: 0; background: none; outline: 0; }
.search input::placeholder { color: #888; }
.fields { position: relative; margin-top: 9px; padding-top: 7px; border-top: 1px solid #c8c8c8; }
.fields h3 { padding-left: 14px; font-size: 11px; line-height: 18px; }
.fields ul { padding-top: 7px; }
.fields li { display: flex; align-items: center; height: 25px; padding-left: 19px; }
.fields .folder { gap: 6px; height: 26px; padding-left: 15px; }
.fields .outer { margin-top: 1px; padding-left: 15px; }
.fields b { width: 20px; color: #4585ba; font: 8px/10px "Liberation Sans Narrow", "Liberation Sans", sans-serif; }
.fields .num { font-size: 9px; }
.fields .green { color: #2fb389; }
.fields .folder svg { color: #333; }
.cal { margin-right: 7px; color: #4585ba; }
.fields-measure { margin-top: 7px; }
.grip { position: absolute; top: -5px; left: 73px; width: 40px; height: 5px; border: 1px solid #c8c8c8; border-bottom: 0; background: #f7f7f7; }
```
